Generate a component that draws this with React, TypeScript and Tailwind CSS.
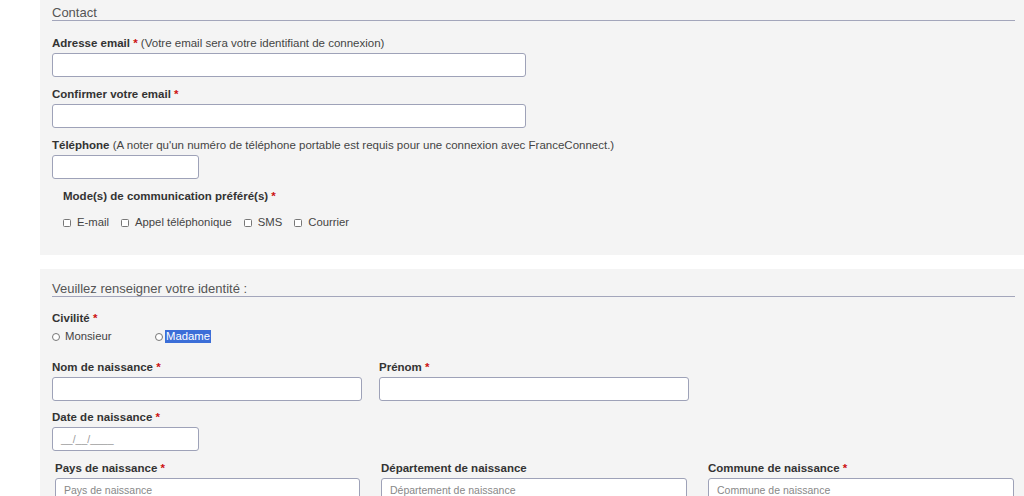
import React from "react";

const font = { fontFamily: '"Liberation Sans", Arial, sans-serif' };

function Req() {
  return <span className="font-bold text-[#cc1111]"> *</span>;
}

function Label({ children, className = "" }: { children: React.ReactNode; className?: string }) {
  return (
    <div className={`text-[11.5px] leading-[14px] text-[#444] ${className}`}>{children}</div>
  );
}

function Field({ className = "", placeholder }: { className?: string; placeholder?: string }) {
  return (
    <div
      className={`mt-[3px] h-6 rounded-[3px] border border-[#9ea2b8] bg-white px-2 text-[10.5px] leading-[22px] text-[#888] ${className}`}
    >
      {placeholder}
    </div>
  );
}

function Box({ label }: { label: string }) {
  return (
    <span className="flex items-center gap-[6px]">
      <span className="h-[8px] w-[8px] rounded-[1.5px] border border-[#777] bg-white" />
      <span>{label}</span>
    </span>
  );
}

function Legend({ children }: { children: React.ReactNode }) {
  return (
    <div className="mr-[9px] border-b border-[#a3a6bb] text-[13px] leading-[15px] text-[#555]">
      {children}
    </div>
  );
}

export default function App() {
  return (
    <div className="min-h-[496px] bg-white pl-10" style={font}>
      {/* Contact */}
      <section className="h-[255px] bg-[#f4f4f4] pl-3 pt-[5px]">
        <Legend>Contact</Legend>
        <Label className="mt-[15px]">
          <b className="text-[#333]">Adresse email</b>
          <Req /> (Votre email sera votre identifiant de connexion)
        </Label>
        <Field className="w-[474px]" />
        <Label className="mt-[10px]">
          <b className="text-[#333]">Confirmer votre email</b>
          <Req />
        </Label>
        <Field className="w-[474px]" />
        <Label className="mt-[10px]">
          <b className="text-[#333]">Téléphone</b> (A noter qu'un numéro de téléphone portable est requis pour une connexion avec FranceConnect.)
        </Label>
        <Field className="w-[147px]" />
        <Label className="ml-[11px] mt-[10px]">
          <b className="text-[#333]">Mode(s) de communication préféré(s)</b>
          <Req />
        </Label>
        <div className="ml-[11px] mt-[13px] flex gap-[12px] text-[11.3px] leading-[13px] text-[#444]">
          <Box label="E-mail" />
          <Box label="Appel téléphonique" />
          <Box label="SMS" />
          <Box label="Courrier" />
        </div>
      </section>

      {/* Identité */}
      <section className="mt-[14px] h-[240px] bg-[#f4f4f4] pl-3 pt-[12px]">
        <Legend>Veuillez renseigner votre identité :</Legend>
        <Label className="mt-[14px]">
          <b className="text-[#333]">Civilité</b>
          <Req />
        </Label>
        <div className="mt-[5px] flex text-[11.3px] leading-[13px] text-[#444]">
          <span className="flex w-[103px] items-center gap-[5px]">
            <span className="h-[8px] w-[8px] rounded-full border border-[#777] bg-white" />
            Monsieur
          </span>
          <span className="flex items-center gap-[2px]">
            <span className="h-[8px] w-[8px] rounded-full border border-[#777] bg-white" />
            <span className="bg-[#3b6ed8] px-[1px] text-white">Madame</span>
          </span>
        </div>
        <div className="mt-[17px] flex gap-[17px]">
          <div>
            <Label>
              <b className="text-[#333]">Nom de naissance</b>
              <Req />
            </Label>
            <Field className="w-[310px]" />
          </div>
          <div>
            <Label>
              <b className="text-[#333]">Prénom</b>
              <Req />
            </Label>
            <Field className="w-[310px]" />
          </div>
        </div>
        <Label className="mt-[9px]">
          <b className="text-[#333]">Date de naissance</b>
          <Req />
        </Label>
        <Field className="w-[147px] text-[#999]" placeholder="__/__/____" />
        <div className="ml-[3px] mt-[10px] flex gap-[21px]">
          <div>
            <Label>
              <b className="text-[#333]">Pays de naissance</b>
              <Req />
            </Label>
            <Field className="w-[305px]" placeholder="Pays de naissance" />
          </div>
          <div>
            <Label>
              <b className="text-[#333]">Département de naissance</b>
            </Label>
            <Field className="w-[306px]" placeholder="Département de naissance" />
          </div>
          <div>
            <Label>
              <b className="text-[#333]">Commune de naissance</b>
              <Req />
            </Label>
            <Field className="w-[306px]" placeholder="Commune de naissance" />
          </div>
        </div>
      </section>
    </div>
  );
}
